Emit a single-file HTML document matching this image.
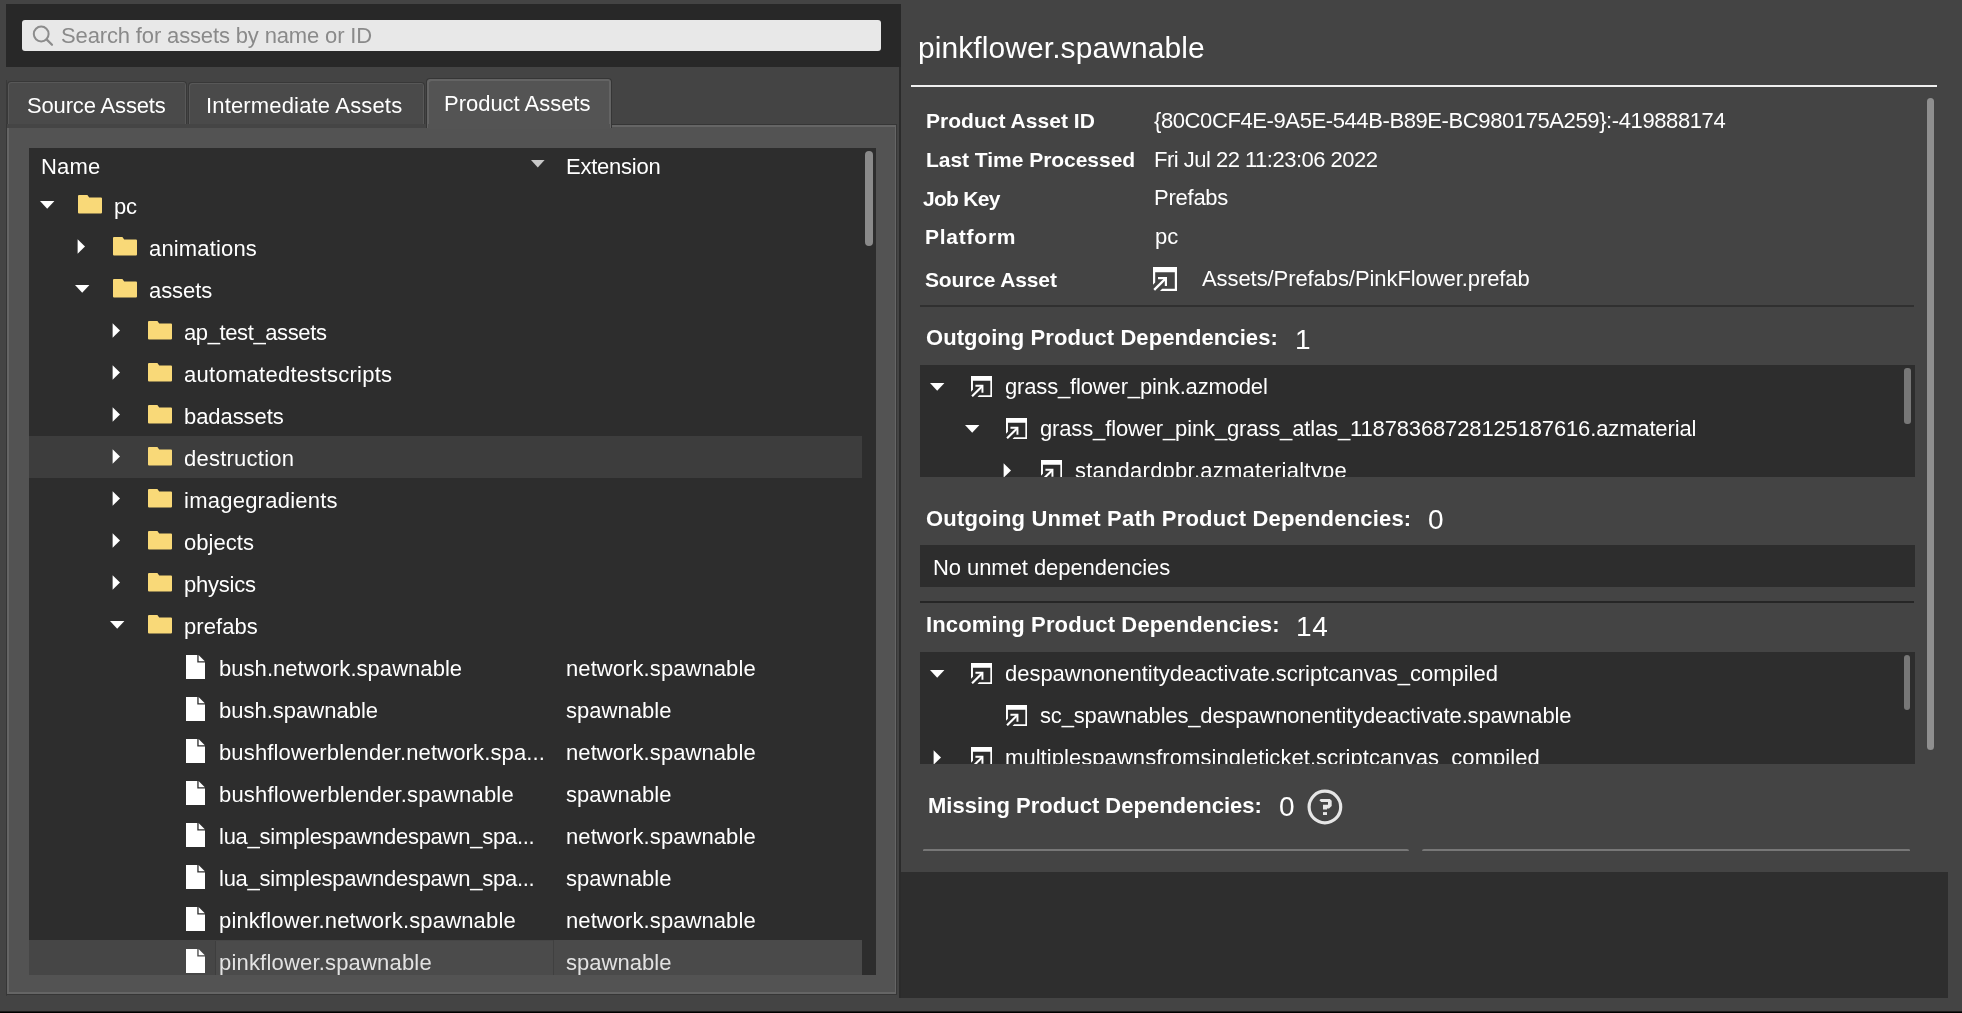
<!DOCTYPE html><html><head><meta charset="utf-8"><style>
html,body{margin:0;padding:0;width:1962px;height:1013px;overflow:hidden;background:#444444}
.r{position:absolute}
.t{position:absolute;white-space:pre;font-family:"Liberation Sans",sans-serif;will-change:transform}
.clip{position:absolute;overflow:hidden}
</style></head><body>
<div class="r" style="left:0px;top:1011px;width:1962px;height:1px;background:#1c1c1c;"></div>
<div class="r" style="left:0px;top:1012px;width:1962px;height:1px;background:#000;"></div>
<div class="r" style="left:6px;top:4px;width:895px;height:63px;background:#282828;"></div>
<div class="r" style="left:22px;top:20px;width:859px;height:31px;background:#e8e8e8;border-radius:3px"></div>
<svg class="r" style="left:30px;top:23px" width="26" height="26" viewBox="0 0 26 26"><circle cx="11.2" cy="11" r="7.4" fill="none" stroke="#8c8c8c" stroke-width="2"/><path d="M16.6 16.4L22 21.8" stroke="#8c8c8c" stroke-width="2.2" stroke-linecap="round"/></svg>
<div class="r" style="left:6px;top:80px;width:1px;height:916px;background:#393939;"></div>
<div class="r" style="left:899px;top:67px;width:2px;height:931px;background:#2b2b2b;"></div>
<div class="r" style="left:7px;top:81px;width:180px;height:44px;background:#4a4a4a;box-sizing:border-box;border:1px solid #383838;border-bottom:none;border-radius:4px 4px 0 0;box-shadow:inset 1px 1px 0 #585858,inset -1px 0 0 #585858"></div>
<div class="r" style="left:187.5px;top:82px;width:237px;height:43px;background:#4a4a4a;box-sizing:border-box;border:1px solid #383838;border-bottom:none;border-radius:4px 4px 0 0;box-shadow:inset 1px 1px 0 #585858,inset -1px 0 0 #585858"></div>
<div class="r" style="left:6px;top:124px;width:891px;height:871px;background:#535353;box-sizing:border-box;border:1px solid #363636;box-shadow:inset 2px 2px 0 #656565,inset -1px -2px 0 #656565"></div>
<div class="r" style="left:7px;top:124px;width:419px;height:3.8px;background:#454545;"></div>
<div class="r" style="left:425.5px;top:78px;width:186px;height:50px;background:#545454;box-sizing:border-box;border:1px solid #363636;border-bottom:none;border-radius:4px 4px 0 0;box-shadow:inset 2px 2px 0 #646464,inset -2px 0 0 #646464"></div>
<div class="r" style="left:427.5px;top:124px;width:182px;height:5px;background:#545454;"></div>
<div class="r" style="left:29px;top:148px;width:847px;height:827px;background:#2d2d2d;"></div>
<div class="r" style="left:29px;top:436px;width:833px;height:42px;background:#3d3d3d;"></div>
<div class="r" style="left:29px;top:940px;width:833px;height:35px;background:#464646;"></div>
<div class="r" style="left:215px;top:941px;width:338px;height:34px;background:#4b4b4b;box-sizing:border-box;border-left:1px solid #3e3e3e"></div>
<div class="r" style="left:553px;top:940px;width:309px;height:35px;background:#4a4a4a;box-sizing:border-box;border-left:1px solid #404040"></div>
<div class="r" style="left:865.3px;top:150.7px;width:7.6px;height:95px;background:#8a8a8a;border-radius:4px"></div>
<svg class="r" style="left:531px;top:159.6px" width="14" height="8" viewBox="0 0 14 8"><path d="M0 0H13.6L6.8 7.4Z" fill="#c8c8c8"/></svg>
<svg class="r" style="left:39.8px;top:201.1px" width="15" height="9" viewBox="0 0 15 9"><path d="M0 0H14.4L7.2 7.7Z" fill="#fff"/></svg>
<svg class="r" style="left:78px;top:195.2px" width="24" height="19" viewBox="0 0 24 19"><path d="M1 0H9.4L11.2 2.4H23A1 1 0 0 1 24 3.4V17.6A1 1 0 0 1 23 18.6H1A1 1 0 0 1 0 17.6V1A1 1 0 0 1 1 0Z" fill="#f9d978"/></svg>
<svg class="r" style="left:77.4px;top:239px" width="9" height="15" viewBox="0 0 9 15"><path d="M0.6 0.3L8 7.5L0.6 14.7Z" fill="#fff"/></svg>
<svg class="r" style="left:113px;top:237.2px" width="24" height="19" viewBox="0 0 24 19"><path d="M1 0H9.4L11.2 2.4H23A1 1 0 0 1 24 3.4V17.6A1 1 0 0 1 23 18.6H1A1 1 0 0 1 0 17.6V1A1 1 0 0 1 1 0Z" fill="#f9d978"/></svg>
<svg class="r" style="left:74.8px;top:285.09999999999997px" width="15" height="9" viewBox="0 0 15 9"><path d="M0 0H14.4L7.2 7.7Z" fill="#fff"/></svg>
<svg class="r" style="left:113px;top:279.2px" width="24" height="19" viewBox="0 0 24 19"><path d="M1 0H9.4L11.2 2.4H23A1 1 0 0 1 24 3.4V17.6A1 1 0 0 1 23 18.6H1A1 1 0 0 1 0 17.6V1A1 1 0 0 1 1 0Z" fill="#f9d978"/></svg>
<svg class="r" style="left:112.4px;top:323px" width="9" height="15" viewBox="0 0 9 15"><path d="M0.6 0.3L8 7.5L0.6 14.7Z" fill="#fff"/></svg>
<svg class="r" style="left:148px;top:321.2px" width="24" height="19" viewBox="0 0 24 19"><path d="M1 0H9.4L11.2 2.4H23A1 1 0 0 1 24 3.4V17.6A1 1 0 0 1 23 18.6H1A1 1 0 0 1 0 17.6V1A1 1 0 0 1 1 0Z" fill="#f9d978"/></svg>
<svg class="r" style="left:112.4px;top:365px" width="9" height="15" viewBox="0 0 9 15"><path d="M0.6 0.3L8 7.5L0.6 14.7Z" fill="#fff"/></svg>
<svg class="r" style="left:148px;top:363.2px" width="24" height="19" viewBox="0 0 24 19"><path d="M1 0H9.4L11.2 2.4H23A1 1 0 0 1 24 3.4V17.6A1 1 0 0 1 23 18.6H1A1 1 0 0 1 0 17.6V1A1 1 0 0 1 1 0Z" fill="#f9d978"/></svg>
<svg class="r" style="left:112.4px;top:407px" width="9" height="15" viewBox="0 0 9 15"><path d="M0.6 0.3L8 7.5L0.6 14.7Z" fill="#fff"/></svg>
<svg class="r" style="left:148px;top:405.2px" width="24" height="19" viewBox="0 0 24 19"><path d="M1 0H9.4L11.2 2.4H23A1 1 0 0 1 24 3.4V17.6A1 1 0 0 1 23 18.6H1A1 1 0 0 1 0 17.6V1A1 1 0 0 1 1 0Z" fill="#f9d978"/></svg>
<svg class="r" style="left:112.4px;top:449px" width="9" height="15" viewBox="0 0 9 15"><path d="M0.6 0.3L8 7.5L0.6 14.7Z" fill="#fff"/></svg>
<svg class="r" style="left:148px;top:447.2px" width="24" height="19" viewBox="0 0 24 19"><path d="M1 0H9.4L11.2 2.4H23A1 1 0 0 1 24 3.4V17.6A1 1 0 0 1 23 18.6H1A1 1 0 0 1 0 17.6V1A1 1 0 0 1 1 0Z" fill="#f9d978"/></svg>
<svg class="r" style="left:112.4px;top:491px" width="9" height="15" viewBox="0 0 9 15"><path d="M0.6 0.3L8 7.5L0.6 14.7Z" fill="#fff"/></svg>
<svg class="r" style="left:148px;top:489.2px" width="24" height="19" viewBox="0 0 24 19"><path d="M1 0H9.4L11.2 2.4H23A1 1 0 0 1 24 3.4V17.6A1 1 0 0 1 23 18.6H1A1 1 0 0 1 0 17.6V1A1 1 0 0 1 1 0Z" fill="#f9d978"/></svg>
<svg class="r" style="left:112.4px;top:533px" width="9" height="15" viewBox="0 0 9 15"><path d="M0.6 0.3L8 7.5L0.6 14.7Z" fill="#fff"/></svg>
<svg class="r" style="left:148px;top:531.2px" width="24" height="19" viewBox="0 0 24 19"><path d="M1 0H9.4L11.2 2.4H23A1 1 0 0 1 24 3.4V17.6A1 1 0 0 1 23 18.6H1A1 1 0 0 1 0 17.6V1A1 1 0 0 1 1 0Z" fill="#f9d978"/></svg>
<svg class="r" style="left:112.4px;top:575px" width="9" height="15" viewBox="0 0 9 15"><path d="M0.6 0.3L8 7.5L0.6 14.7Z" fill="#fff"/></svg>
<svg class="r" style="left:148px;top:573.2px" width="24" height="19" viewBox="0 0 24 19"><path d="M1 0H9.4L11.2 2.4H23A1 1 0 0 1 24 3.4V17.6A1 1 0 0 1 23 18.6H1A1 1 0 0 1 0 17.6V1A1 1 0 0 1 1 0Z" fill="#f9d978"/></svg>
<svg class="r" style="left:109.8px;top:621.1px" width="15" height="9" viewBox="0 0 15 9"><path d="M0 0H14.4L7.2 7.7Z" fill="#fff"/></svg>
<svg class="r" style="left:148px;top:615.2px" width="24" height="19" viewBox="0 0 24 19"><path d="M1 0H9.4L11.2 2.4H23A1 1 0 0 1 24 3.4V17.6A1 1 0 0 1 23 18.6H1A1 1 0 0 1 0 17.6V1A1 1 0 0 1 1 0Z" fill="#f9d978"/></svg>
<svg class="r" style="left:185.5px;top:655px" width="19" height="24" viewBox="0 0 19 24"><path d="M0 0H11.3V7.6H19V24H0Z" fill="#fff"/><path d="M12.6 0L18.8 6.2H12.6Z" fill="#fff"/></svg>
<svg class="r" style="left:185.5px;top:697px" width="19" height="24" viewBox="0 0 19 24"><path d="M0 0H11.3V7.6H19V24H0Z" fill="#fff"/><path d="M12.6 0L18.8 6.2H12.6Z" fill="#fff"/></svg>
<svg class="r" style="left:185.5px;top:739px" width="19" height="24" viewBox="0 0 19 24"><path d="M0 0H11.3V7.6H19V24H0Z" fill="#fff"/><path d="M12.6 0L18.8 6.2H12.6Z" fill="#fff"/></svg>
<svg class="r" style="left:185.5px;top:781px" width="19" height="24" viewBox="0 0 19 24"><path d="M0 0H11.3V7.6H19V24H0Z" fill="#fff"/><path d="M12.6 0L18.8 6.2H12.6Z" fill="#fff"/></svg>
<svg class="r" style="left:185.5px;top:823px" width="19" height="24" viewBox="0 0 19 24"><path d="M0 0H11.3V7.6H19V24H0Z" fill="#fff"/><path d="M12.6 0L18.8 6.2H12.6Z" fill="#fff"/></svg>
<svg class="r" style="left:185.5px;top:865px" width="19" height="24" viewBox="0 0 19 24"><path d="M0 0H11.3V7.6H19V24H0Z" fill="#fff"/><path d="M12.6 0L18.8 6.2H12.6Z" fill="#fff"/></svg>
<svg class="r" style="left:185.5px;top:907px" width="19" height="24" viewBox="0 0 19 24"><path d="M0 0H11.3V7.6H19V24H0Z" fill="#fff"/><path d="M12.6 0L18.8 6.2H12.6Z" fill="#fff"/></svg>
<svg class="r" style="left:185.5px;top:949px" width="19" height="24" viewBox="0 0 19 24"><path d="M0 0H11.3V7.6H19V24H0Z" fill="#fff"/><path d="M12.6 0L18.8 6.2H12.6Z" fill="#fff"/></svg>
<div class="r" style="left:911px;top:85px;width:1026px;height:2px;background:#f0f0f0;"></div>
<div class="r" style="left:1927px;top:98.3px;width:7px;height:652px;background:#8f8f8f;border-radius:3.5px"></div>
<svg class="r" style="left:1153px;top:267px" width="24" height="24" viewBox="0 0 24 24"><path d="M0 0H24V24H7L9.2 21.8H21.8V5.3H2.2V15.6L0 17.8Z" fill="#fff"/><path d="M1.2 22.9L12.6 11.5" stroke="#fff" stroke-width="2.4"/><path d="M5 10H14V19H11.8V12.2H5Z" fill="#fff"/></svg>
<div class="r" style="left:920px;top:305px;width:994px;height:1.5px;background:#303030;"></div>
<div class="r" style="left:920px;top:365px;width:994.6px;height:111.6px;background:#2d2d2d;"></div>
<div class="r" style="left:1904.3px;top:368.1px;width:6.5px;height:55.7px;background:#777;border-radius:3px"></div>
<div class="r" style="left:920px;top:545.2px;width:994.6px;height:41.4px;background:#2d2d2d;"></div>
<div class="r" style="left:920px;top:601px;width:994px;height:2px;background:#262626;"></div>
<div class="r" style="left:920px;top:652px;width:994.6px;height:111.6px;background:#2d2d2d;"></div>
<div class="r" style="left:1904.2px;top:655.3px;width:6.3px;height:55px;background:#777;border-radius:3px"></div>
<svg class="r" style="left:1306px;top:788px" width="38" height="38" viewBox="0 0 38 38"><circle cx="18.9" cy="19" r="15.8" fill="none" stroke="#e6e6e6" stroke-width="3.2"/><path d="M13.4 12.3L14.7 11H23.9L25.7 12.8V17.9L23 20.6H21V21.6H17V16.7H22V14H15.2Z" fill="#e6e6e6"/><rect x="17" y="24.1" width="4" height="2.9" fill="#e6e6e6"/></svg>
<div class="r" style="left:923px;top:849px;width:486px;height:2.4px;background:#777;border-radius:2px 3px 0 0"></div>
<div class="r" style="left:1422px;top:849px;width:488px;height:2.4px;background:#777;border-radius:3px 2px 0 0"></div>
<div class="r" style="left:901px;top:872px;width:1047px;height:126px;background:#2e2e2e;"></div>
<div class="clip" style="left:920px;top:365px;width:994.6px;height:111.6px">
<svg class="r" style="left:9.8px;top:18.0px" width="15" height="9" viewBox="0 0 15 9"><path d="M0 0H14.4L7.2 7.7Z" fill="#fff"/></svg>
<svg class="r" style="left:50.799999999999955px;top:10.800000000000011px" width="21.3" height="21.3" viewBox="0 0 24 24"><path d="M0 0H24V24H7L9.2 21.8H21.8V5.3H2.2V15.6L0 17.8Z" fill="#fff"/><path d="M1.2 22.9L12.6 11.5" stroke="#fff" stroke-width="2.4"/><path d="M5 10H14V19H11.8V12.2H5Z" fill="#fff"/></svg>
<svg class="r" style="left:44.8px;top:60.0px" width="15" height="9" viewBox="0 0 15 9"><path d="M0 0H14.4L7.2 7.7Z" fill="#fff"/></svg>
<svg class="r" style="left:85.79999999999995px;top:52.80000000000001px" width="21.3" height="21.3" viewBox="0 0 24 24"><path d="M0 0H24V24H7L9.2 21.8H21.8V5.3H2.2V15.6L0 17.8Z" fill="#fff"/><path d="M1.2 22.9L12.6 11.5" stroke="#fff" stroke-width="2.4"/><path d="M5 10H14V19H11.8V12.2H5Z" fill="#fff"/></svg>
<svg class="r" style="left:82.9px;top:97.5px" width="9" height="15" viewBox="0 0 9 15"><path d="M0.6 0.3L8 7.5L0.6 14.7Z" fill="#fff"/></svg>
<svg class="r" style="left:120.79999999999995px;top:94.80000000000001px" width="21.3" height="21.3" viewBox="0 0 24 24"><path d="M0 0H24V24H7L9.2 21.8H21.8V5.3H2.2V15.6L0 17.8Z" fill="#fff"/><path d="M1.2 22.9L12.6 11.5" stroke="#fff" stroke-width="2.4"/><path d="M5 10H14V19H11.8V12.2H5Z" fill="#fff"/></svg>
<div class="t" style="left:85.29999999999995px;top:11px;font-size:22px;line-height:22px;font-weight:400;color:#ffffff;letter-spacing:-0.156px">grass_flower_pink.azmodel</div>
<div class="t" style="left:120.20000000000005px;top:53px;font-size:22px;line-height:22px;font-weight:400;color:#ffffff;letter-spacing:-0.143px">grass_flower_pink_grass_atlas_11878368728125187616.azmaterial</div>
<div class="t" style="left:155.20000000000005px;top:95px;font-size:22px;line-height:22px;font-weight:400;color:#ffffff;letter-spacing:0.25px">standardpbr.azmaterialtype</div>
</div>
<div class="clip" style="left:920px;top:652px;width:994.6px;height:111.6px">
<svg class="r" style="left:9.8px;top:18.0px" width="15" height="9" viewBox="0 0 15 9"><path d="M0 0H14.4L7.2 7.7Z" fill="#fff"/></svg>
<svg class="r" style="left:50.799999999999955px;top:10.799999999999955px" width="21.3" height="21.3" viewBox="0 0 24 24"><path d="M0 0H24V24H7L9.2 21.8H21.8V5.3H2.2V15.6L0 17.8Z" fill="#fff"/><path d="M1.2 22.9L12.6 11.5" stroke="#fff" stroke-width="2.4"/><path d="M5 10H14V19H11.8V12.2H5Z" fill="#fff"/></svg>
<svg class="r" style="left:85.79999999999995px;top:52.799999999999955px" width="21.3" height="21.3" viewBox="0 0 24 24"><path d="M0 0H24V24H7L9.2 21.8H21.8V5.3H2.2V15.6L0 17.8Z" fill="#fff"/><path d="M1.2 22.9L12.6 11.5" stroke="#fff" stroke-width="2.4"/><path d="M5 10H14V19H11.8V12.2H5Z" fill="#fff"/></svg>
<svg class="r" style="left:12.9px;top:97.5px" width="9" height="15" viewBox="0 0 9 15"><path d="M0.6 0.3L8 7.5L0.6 14.7Z" fill="#fff"/></svg>
<svg class="r" style="left:50.799999999999955px;top:94.79999999999995px" width="21.3" height="21.3" viewBox="0 0 24 24"><path d="M0 0H24V24H7L9.2 21.8H21.8V5.3H2.2V15.6L0 17.8Z" fill="#fff"/><path d="M1.2 22.9L12.6 11.5" stroke="#fff" stroke-width="2.4"/><path d="M5 10H14V19H11.8V12.2H5Z" fill="#fff"/></svg>
<div class="t" style="left:85px;top:11px;font-size:22px;line-height:22px;font-weight:400;color:#ffffff;letter-spacing:-0.026px">despawnonentitydeactivate.scriptcanvas_compiled</div>
<div class="t" style="left:119.5px;top:53px;font-size:22px;line-height:22px;font-weight:400;color:#ffffff;letter-spacing:-0.165px">sc_spawnables_despawnonentitydeactivate.spawnable</div>
<div class="t" style="left:85px;top:95px;font-size:22px;line-height:22px;font-weight:400;color:#ffffff;letter-spacing:0.056px">multiplespawnsfromsingleticket.scriptcanvas_compiled</div>
</div>
<div class="clip" style="left:29px;top:148px;width:847px;height:827px">
<div class="t" style="left:12.200000000000003px;top:8px;font-size:22px;line-height:22px;font-weight:400;color:#ffffff;letter-spacing:0.175px">Name</div>
<div class="t" style="left:536.7px;top:8px;font-size:22px;line-height:22px;font-weight:400;color:#ffffff;letter-spacing:-0.244px">Extension</div>
<div class="t" style="left:84.8px;top:48px;font-size:22px;line-height:22px;font-weight:400;color:#ffffff;letter-spacing:-0.3px">pc</div>
<div class="t" style="left:119.6px;top:90px;font-size:22px;line-height:22px;font-weight:400;color:#ffffff;letter-spacing:0.16px">animations</div>
<div class="t" style="left:119.6px;top:132px;font-size:22px;line-height:22px;font-weight:400;color:#ffffff;letter-spacing:-0.067px">assets</div>
<div class="t" style="left:154.8px;top:174px;font-size:22px;line-height:22px;font-weight:400;color:#ffffff;letter-spacing:-0.393px">ap_test_assets</div>
<div class="t" style="left:154.8px;top:216px;font-size:22px;line-height:22px;font-weight:400;color:#ffffff;letter-spacing:0.27px">automatedtestscripts</div>
<div class="t" style="left:154.8px;top:258px;font-size:22px;line-height:22px;font-weight:400;color:#ffffff;letter-spacing:-0.078px">badassets</div>
<div class="t" style="left:154.8px;top:300px;font-size:22px;line-height:22px;font-weight:400;color:#ffffff;letter-spacing:0.236px">destruction</div>
<div class="t" style="left:154.8px;top:342px;font-size:22px;line-height:22px;font-weight:400;color:#ffffff;letter-spacing:0.243px">imagegradients</div>
<div class="t" style="left:154.8px;top:384px;font-size:22px;line-height:22px;font-weight:400;color:#ffffff;letter-spacing:0.029px">objects</div>
<div class="t" style="left:154.8px;top:426px;font-size:22px;line-height:22px;font-weight:400;color:#ffffff;letter-spacing:-0.214px">physics</div>
<div class="t" style="left:154.8px;top:468px;font-size:22px;line-height:22px;font-weight:400;color:#ffffff;letter-spacing:0.071px">prefabs</div>
<div class="t" style="left:190.2px;top:510px;font-size:22px;line-height:22px;font-weight:400;color:#ffffff;letter-spacing:0.045px">bush.network.spawnable</div>
<div class="t" style="left:537.2px;top:510px;font-size:22px;line-height:22px;font-weight:400;color:#ffffff;letter-spacing:0.082px">network.spawnable</div>
<div class="t" style="left:190.2px;top:552px;font-size:22px;line-height:22px;font-weight:400;color:#ffffff;letter-spacing:0.0px">bush.spawnable</div>
<div class="t" style="left:537.2px;top:552px;font-size:22px;line-height:22px;font-weight:400;color:#ffffff;letter-spacing:0.022px">spawnable</div>
<div class="t" style="left:190.2px;top:594px;font-size:22px;line-height:22px;font-weight:400;color:#ffffff;letter-spacing:0.137px">bushflowerblender.network.spa...</div>
<div class="t" style="left:537.2px;top:594px;font-size:22px;line-height:22px;font-weight:400;color:#ffffff;letter-spacing:0.082px">network.spawnable</div>
<div class="t" style="left:190.2px;top:636px;font-size:22px;line-height:22px;font-weight:400;color:#ffffff;letter-spacing:0.185px">bushflowerblender.spawnable</div>
<div class="t" style="left:537.2px;top:636px;font-size:22px;line-height:22px;font-weight:400;color:#ffffff;letter-spacing:0.022px">spawnable</div>
<div class="t" style="left:190.2px;top:678px;font-size:22px;line-height:22px;font-weight:400;color:#ffffff;letter-spacing:-0.255px">lua_simplespawndespawn_spa...</div>
<div class="t" style="left:537.2px;top:678px;font-size:22px;line-height:22px;font-weight:400;color:#ffffff;letter-spacing:0.082px">network.spawnable</div>
<div class="t" style="left:190.2px;top:720px;font-size:22px;line-height:22px;font-weight:400;color:#ffffff;letter-spacing:-0.255px">lua_simplespawndespawn_spa...</div>
<div class="t" style="left:537.2px;top:720px;font-size:22px;line-height:22px;font-weight:400;color:#ffffff;letter-spacing:0.022px">spawnable</div>
<div class="t" style="left:190.2px;top:762px;font-size:22px;line-height:22px;font-weight:400;color:#ffffff;letter-spacing:0.164px">pinkflower.network.spawnable</div>
<div class="t" style="left:537.2px;top:762px;font-size:22px;line-height:22px;font-weight:400;color:#ffffff;letter-spacing:0.082px">network.spawnable</div>
<div class="t" style="left:190.2px;top:804px;font-size:22px;line-height:22px;font-weight:400;color:#e2e2e2;letter-spacing:0.185px">pinkflower.spawnable</div>
<div class="t" style="left:537.2px;top:804px;font-size:22px;line-height:22px;font-weight:400;color:#e2e2e2;letter-spacing:0.022px">spawnable</div>
</div>
<div class="t" style="left:61.4px;top:25px;font-size:22px;line-height:22px;font-weight:400;color:#8a8a8a;letter-spacing:-0.142px">Search for assets by name or ID</div>
<div class="t" style="left:26.5px;top:95px;font-size:22px;line-height:22px;font-weight:400;color:#ffffff;letter-spacing:-0.154px">Source Assets</div>
<div class="t" style="left:206.2px;top:95px;font-size:22px;line-height:22px;font-weight:400;color:#ffffff;letter-spacing:0.163px">Intermediate Assets</div>
<div class="t" style="left:443.6px;top:93px;font-size:22px;line-height:22px;font-weight:400;color:#ffffff;letter-spacing:-0.021px">Product Assets</div>
<div class="t" style="left:918px;top:33px;font-size:30px;line-height:30px;font-weight:400;color:#ffffff;letter-spacing:0.075px">pinkflower.spawnable</div>
<div class="t" style="left:925.6px;top:110px;font-size:21px;line-height:21px;font-weight:700;color:#ffffff;letter-spacing:0.025px">Product Asset ID</div>
<div class="t" style="left:925.6px;top:149px;font-size:21px;line-height:21px;font-weight:700;color:#ffffff;letter-spacing:-0.032px">Last Time Processed</div>
<div class="t" style="left:923.3px;top:187.5px;font-size:21px;line-height:21px;font-weight:700;color:#ffffff;letter-spacing:-0.714px">Job Key</div>
<div class="t" style="left:925.3px;top:226px;font-size:21px;line-height:21px;font-weight:700;color:#ffffff;letter-spacing:0.762px">Platform</div>
<div class="t" style="left:924.7px;top:269px;font-size:21px;line-height:21px;font-weight:700;color:#ffffff;letter-spacing:-0.142px">Source Asset</div>
<div class="t" style="left:1154.4px;top:110px;font-size:22px;line-height:22px;font-weight:400;color:#ffffff;letter-spacing:-0.398px">{80C0CF4E-9A5E-544B-B89E-BC980175A259}:-419888174</div>
<div class="t" style="left:1153.8px;top:149px;font-size:22px;line-height:22px;font-weight:400;color:#ffffff;letter-spacing:-0.508px">Fri Jul 22 11:23:06 2022</div>
<div class="t" style="left:1153.8px;top:187px;font-size:22px;line-height:22px;font-weight:400;color:#ffffff;letter-spacing:-0.243px">Prefabs</div>
<div class="t" style="left:1154.8px;top:226px;font-size:22px;line-height:22px;font-weight:400;color:#ffffff;letter-spacing:0.0px">pc</div>
<div class="t" style="left:1201.5px;top:268px;font-size:22px;line-height:22px;font-weight:400;color:#ffffff;letter-spacing:-0.078px">Assets/Prefabs/PinkFlower.prefab</div>
<div class="t" style="left:925.7px;top:327px;font-size:22px;line-height:22px;font-weight:700;color:#ffffff;letter-spacing:0.077px">Outgoing Product Dependencies:</div>
<div class="t" style="left:1295.4px;top:326px;font-size:28px;line-height:28px;font-weight:400;color:#ffffff;letter-spacing:0.0px">1</div>
<div class="t" style="left:925.8px;top:508px;font-size:22px;line-height:22px;font-weight:700;color:#ffffff;letter-spacing:0.18px">Outgoing Unmet Path Product Dependencies:</div>
<div class="t" style="left:1428px;top:506px;font-size:28px;line-height:28px;font-weight:400;color:#ffffff;letter-spacing:0.0px">0</div>
<div class="t" style="left:932.8px;top:557px;font-size:22px;line-height:22px;font-weight:400;color:#ffffff;letter-spacing:-0.067px">No unmet dependencies</div>
<div class="t" style="left:926.1px;top:614px;font-size:22px;line-height:22px;font-weight:700;color:#ffffff;letter-spacing:0.133px">Incoming Product Dependencies:</div>
<div class="t" style="left:1296.2px;top:613px;font-size:28px;line-height:28px;font-weight:400;color:#ffffff;letter-spacing:0.65px">14</div>
<div class="t" style="left:928.1px;top:795px;font-size:22px;line-height:22px;font-weight:700;color:#ffffff;letter-spacing:0.007px">Missing Product Dependencies:</div>
<div class="t" style="left:1279.2px;top:793px;font-size:28px;line-height:28px;font-weight:400;color:#ffffff;letter-spacing:0.0px">0</div>
</body></html>
